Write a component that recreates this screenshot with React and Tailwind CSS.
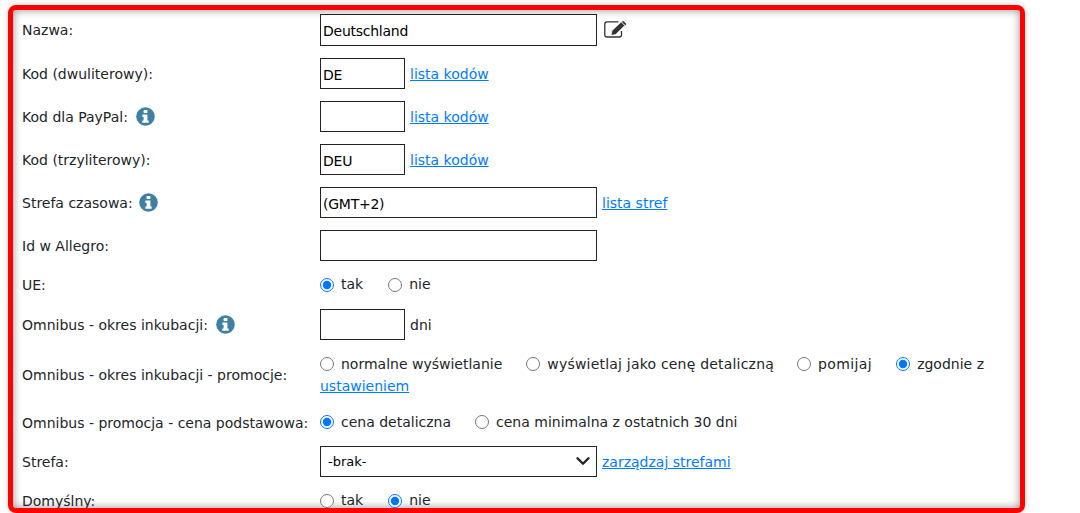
import React from "react";
import { ChevronDown } from "lucide-react";

const Info = ({ className }) => (
  <svg viewBox="0 0 20 20" className={`w-[19px] h-[19px] -mt-[2px] shrink-0 ${className || "ml-[8px]"}`}>
    <circle cx="10" cy="10" r="9.8" fill="#3f7fa6" />
    <rect x="8" y="3.2" width="4" height="3.2" rx="0.6" fill="#fff" />
    <path d="M6.7 8h5.3v6.3h1.3v2.4H6.7v-2.4H8v-3.9H6.7z" fill="#fff" />
  </svg>
);

const EditIcon = () => (
  <svg viewBox="0 0 23 17" className="w-[23px] h-[17px] ml-[7px] mt-[7px] shrink-0">
    <path d="M14.5 .8H3A2.2 2.2 0 0 0 .8 3v10.8A2.2 2.2 0 0 0 3 16h12.3a2.2 2.2 0 0 0 2.2-2.2V10" fill="none" stroke="#333" strokeWidth="1.3" />
    <path d="M8 9.6 17.2 .9l3.6 3.6-9.1 9-4.6 1z" fill="#333" stroke="#fff" strokeWidth=".7" />
    <path d="M18.4 .4a1.1 1.1 0 0 1 1.5 0l1.9 1.9a1.1 1.1 0 0 1 0 1.5l-.5.5-3.4-3.4z" fill="#333" />
  </svg>
);

const Label = ({ children, first }) => (
  <div className={`w-[298px] shrink-0 flex items-center ${first ? "" : "pt-[2px]"}`}>{children}</div>
);

const Field = ({ value, wide, first }) => (
  <input
    readOnly
    defaultValue={value}
    className={`${wide ? "w-[277px]" : "w-[85px]"} ${first ? "h-[32px]" : "h-[31px]"} border border-[#222] bg-white px-[2px] pt-[2px] text-[14px] tracking-[-0.25px] text-black outline-none`}
  />
);

const A = ({ children }) => (
  <a href="#" className="text-[#007bff] underline">{children}</a>
);

const Radio = ({ label, checked, name, className }) => (
  <label className={`inline-flex items-center align-top h-[22px] ${className || ""}`}>
    <input type="radio" name={name} defaultChecked={checked} className="w-[14px] h-[14px] m-0 mr-[7px]" />
    {label}
  </label>
);

const After = ({ children }) => <span className="ml-[5px] pt-[2px]">{children}</span>;

export default function App() {
  return (
    <div className="w-[1080px] h-[513px] bg-white overflow-hidden pt-[5px] pl-[8px] font-['DejaVu_Sans',sans-serif]">
      <div className="w-[1017px] h-[508px] border-[5px] border-[#ff0000] rounded-[8px] overflow-hidden bg-white pl-[9px] pt-[4px] text-[14px] text-[#212529] shadow-[inset_0_0_8px_rgba(0,0,0,0.45),0_0_6px_rgba(0,0,0,0.2)] flex flex-col gap-[12px]">
        <div className="flex">
          <Label first>Nazwa:</Label>
          <Field value="Deutschland" wide first />
          <EditIcon />
        </div>
        <div className="flex items-center">
          <Label>Kod (dwuliterowy):</Label>
          <Field value="DE" />
          <After><A>lista kodów</A></After>
        </div>
        <div className="flex items-center">
          <Label>Kod dla PayPal:<Info /></Label>
          <Field value="" />
          <After><A>lista kodów</A></After>
        </div>
        <div className="flex items-center">
          <Label>Kod (trzyliterowy):</Label>
          <Field value="DEU" />
          <After><A>lista kodów</A></After>
        </div>
        <div className="flex items-center">
          <Label>Strefa czasowa:<Info className="ml-[6px]" /></Label>
          <Field value="(GMT+2)" wide />
          <After><A>lista stref</A></After>
        </div>
        <div className="flex items-center">
          <Label>Id w Allegro:</Label>
          <Field value="" wide />
        </div>
        <div className="flex items-center h-[24px] mb-[1px]">
          <Label>UE:</Label>
          <Radio name="ue" label="tak" checked className="mr-[25px]" />
          <Radio name="ue" label="nie" />
        </div>
        <div className="flex items-center">
          <Label>Omnibus - okres inkubacji:<Info /></Label>
          <Field value="" />
          <After>dni</After>
        </div>
        <div className="flex items-center h-[46px]">
          <Label>Omnibus - okres inkubacji - promocje:</Label>
          <div className="w-[680px] leading-[22px] pt-[1px]">
            <Radio name="pr" label="normalne wyświetlanie" className="mr-[24px]" />
            <Radio name="pr" label="wyświetlaj jako cenę detaliczną" className="mr-[23px] tracking-[0.2px]" />
            <Radio name="pr" label="pomijaj" className="mr-[24px] tracking-[0.4px]" />
            <Radio name="pr" label="zgodnie z" checked />
            <div><A>ustawieniem</A></div>
          </div>
        </div>
        <div className="flex items-center h-[24px] pt-[2px] mb-[1px]">
          <Label>Omnibus - promocja - cena podstawowa:</Label>
          <Radio name="cena" label="cena detaliczna" checked className="mr-[24px]" />
          <Radio name="cena" label="cena minimalna z ostatnich 30 dni" />
        </div>
        <div className="flex items-center">
          <Label>Strefa:</Label>
          <div className="relative w-[277px] h-[31px]">
            <select className="appearance-none w-full h-full border border-[#222] bg-white px-[7px] text-[13px] text-black outline-none">
              <option>-brak-</option>
            </select>
            <ChevronDown className="absolute right-[3px] top-[4px] w-[22px] h-[22px] text-[#222] pointer-events-none" strokeWidth={2.6} />
          </div>
          <After><A>zarządzaj strefami</A></After>
        </div>
        <div className="flex items-center h-[23px]">
          <Label>Domyślny:</Label>
          <Radio name="dom" label="tak" className="mr-[25px]" />
          <Radio name="dom" label="nie" checked />
        </div>
      </div>
    </div>
  );
}
